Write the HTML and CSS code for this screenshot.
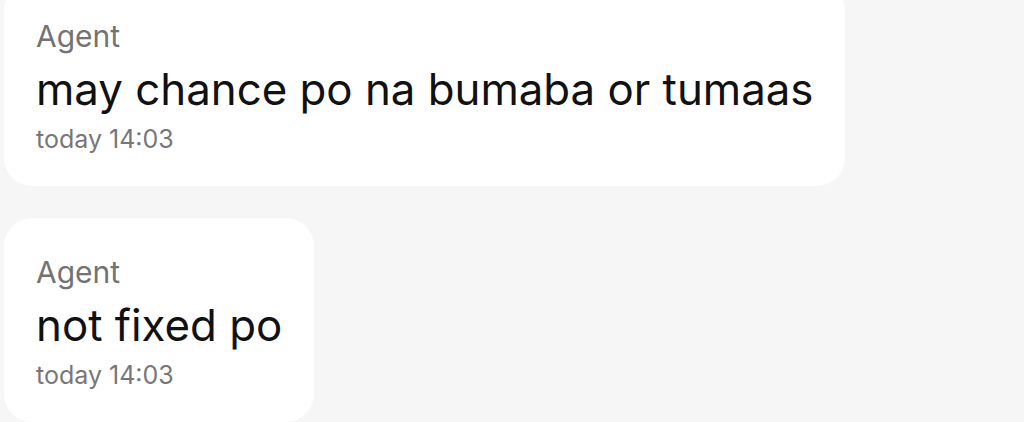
FILE: index.html
```html
<!DOCTYPE html>
<html lang="en">
<head>
    <meta charset="UTF-8">
    <meta name="viewport" content="width=device-width, initial-scale=1.0">
    <title>Chat</title>
    <link rel="stylesheet" href="styles.css">
</head>
<body>

<div class="chat">
    <div class="bubble">
        <p class="sender">Agent</p>
        <p class="text">may chance po na bumaba or tumaas</p>
        <p class="time">today 14:03</p>
    </div>

    <div class="bubble">
        <p class="sender">Agent</p>
        <p class="text">not fixed po</p>
        <p class="time">today 14:03</p>
    </div>
</div>

</body>
</html>
```

FILE: styles.css
```css
/* Reset dan dasar */
* {
    margin: 0;
    padding: 0;
    box-sizing: border-box;
}

body {
    font-family: Inter, "Noto Sans", sans-serif;
    background-color: #f6f6f6;
    color: #111;
    overflow: hidden;
}

.chat {
    display: flex;
    flex-direction: column;
    align-items: flex-start;
    gap: 32px;
    margin-top: -18px;
    padding-left: 4px;
}

.bubble {
    background-color: #fff;
    border-radius: 28px;
    padding: 34px 32px 32px;
}

.sender {
    font-size: 30px;
    line-height: 40px;
    color: #737373;
}

.text {
    font-size: 43.8px;
    line-height: 56px;
    margin-top: 6px;
    color: #111;
}

.time {
    font-size: 25px;
    line-height: 30px;
    margin-top: 6px;
    color: #777;
}
```
